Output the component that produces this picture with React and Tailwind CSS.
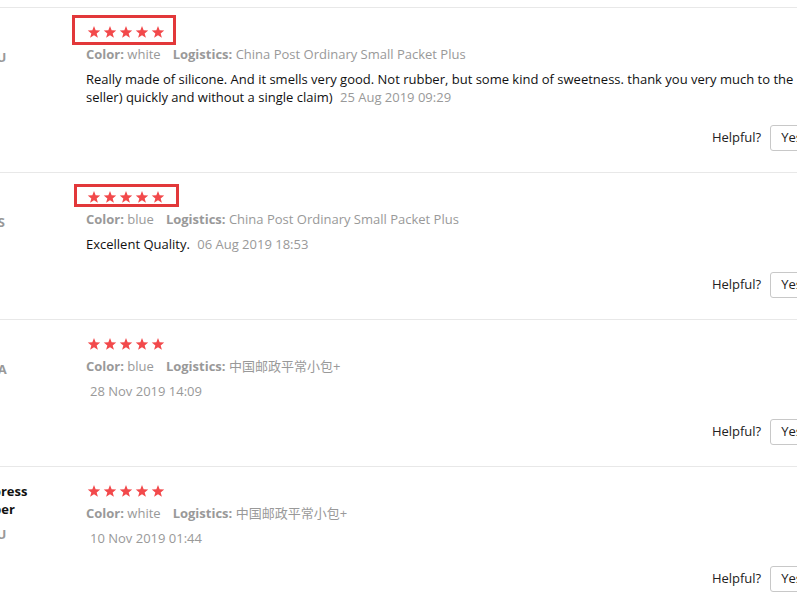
import React from 'react';

const REVIEWS = [
  {
    name: 'V***',
    country: 'RU',
    color: 'white',
    logistics: 'China Post Ordinary Small Packet Plus',
    text: 'Really made of silicone. And it smells very good. Not rubber, but some kind of sweetness. thank you very much to the seller) quickly and without a single claim)',
    date: '25 Aug 2019 09:29',
    mark: { box: 'top-[-8px] left-[-14px] w-[104px] h-[30px]' },
  },
  {
    name: 'J***',
    country: 'US',
    color: 'blue',
    logistics: 'China Post Ordinary Small Packet Plus',
    text: 'Excellent Quality.',
    date: '06 Aug 2019 18:53',
    mark: { box: 'top-[-4px] left-[-12px] w-[105px] h-[23px]' },
  },
  {
    name: 'O***',
    country: 'UA',
    color: 'blue',
    logistics: '中国邮政平常小包+',
    text: '',
    date: '28 Nov 2019 14:09',
  },
  {
    name: 'AliExpress Shopper',
    country: 'RU',
    color: 'white',
    logistics: '中国邮政平常小包+',
    text: '',
    date: '10 Nov 2019 01:44',
  },
];

const Star = () => (
  <svg width="14" height="13" viewBox="0 0 24 23" className="block">
    <path d="M12 0l2.9 7.6 8.1.4-6.3 5.1 2.2 7.9L12 16.5 5.1 21l2.2-7.9L1 8l8.1-.4z" fill="#f2494b" />
  </svg>
);

function Review({ r }) {
  return (
    <div className="flex border-t border-[#e8e8e8]">
      {/* user column, mostly scrolled off the left edge */}
      <div className="w-[86px] shrink-0 overflow-hidden pt-[15px]">
        <div className="-ml-[39px] w-[110px]">
          <p className="font-bold text-[13px] leading-[18px] text-[#111]">{r.name}</p>
          <p className="mt-[7px] flex items-center text-[13px] leading-[18px] font-bold text-[#999]">
            <span className="inline-block w-[21px] h-[14px] mr-[6px]" />
            {r.country}
          </p>
        </div>
      </div>

      <div className="w-[728px] shrink-0 pt-[15px] pb-[21px]">
        <div className="relative flex items-center gap-[2px] h-[18px] pl-[1px]">
          {[0, 1, 2, 3, 4].map((i) => <Star key={i} />)}
          {r.mark && <div className={`absolute border-[3px] border-[#e2383a] ${r.mark.box}`} />}
        </div>

        <p className="mt-[4px] text-[13px] leading-[18px] text-[#999]">
          <span className="font-bold">Color:</span> {r.color}
          <span className="ml-[12px] font-bold">Logistics:</span> {r.logistics}
        </p>

        <p className="mt-[7px] text-[13px] leading-[18px] text-[#111]">
          {r.text}
          {r.text ? ' ' : ''}
          <span className="ml-[4px] text-[#999]">{r.date}</span>
        </p>

        <div className="mt-[19px] flex items-center justify-end">
          <span className="text-[13px] text-[#222]">Helpful?</span>
          <button className="ml-[9px] h-[26px] pl-[10px] pr-[11px] border border-[#c8c8c8] rounded-[3px] bg-white text-[13px] text-[#222]">
            Yes
          </button>
        </div>
      </div>
    </div>
  );
}

export default function App() {
  return (
    <div className="w-[797px] h-[611px] overflow-hidden bg-white font-['Open_Sans','Noto_Sans_CJK_SC',sans-serif]">
      <div className="h-[7px]" />
      {REVIEWS.map((r, i) => (
        <Review key={i} r={r} />
      ))}
    </div>
  );
}
